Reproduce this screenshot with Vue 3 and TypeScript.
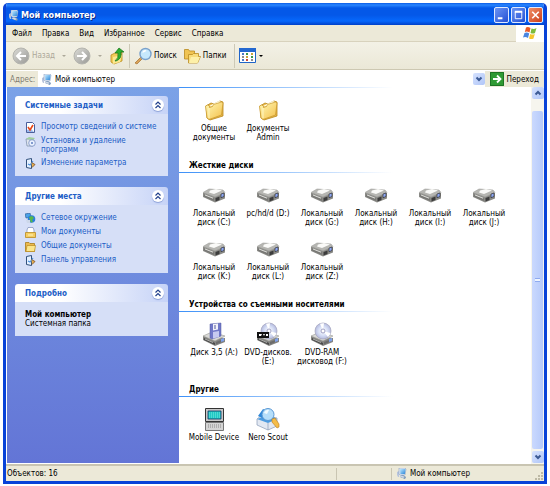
<script setup lang="ts">
interface Entry { icon: string; lines: string[] }
interface Group { title: string; entries: Entry[] }
interface Task { icon: string; label: string }
interface Panel { title: string; tasks: Task[] }

const menus: string[] = ['Файл', 'Правка', 'Вид', 'Избранное', 'Сервис', 'Справка']

const panels: Panel[] = [
  {
    title: 'Системные задачи',
    tasks: [
      { icon: 'check', label: 'Просмотр сведений о системе' },
      { icon: 'install', label: 'Установка и удаление программ' },
      { icon: 'panel', label: 'Изменение параметра' },
    ],
  },
  {
    title: 'Другие места',
    tasks: [
      { icon: 'network', label: 'Сетевое окружение' },
      { icon: 'docs', label: 'Мои документы' },
      { icon: 'shared', label: 'Общие документы' },
      { icon: 'panel', label: 'Панель управления' },
    ],
  },
]

const drive = (name: string, letter: string): Entry => ({ icon: 'drive', lines: [name, letter] })

const groups: Group[] = [
  {
    title: '',
    entries: [
      { icon: 'folder', lines: ['Общие', 'документы'] },
      { icon: 'folder', lines: ['Документы', 'Admin'] },
    ],
  },
  {
    title: 'Жесткие диски',
    entries: [
      drive('Локальный', 'диск (C:)'),
      { icon: 'drive', lines: ['pc/hd/d (D:)'] },
      drive('Локальный', 'диск (G:)'),
      drive('Локальный', 'диск (H:)'),
      drive('Локальный', 'диск (I:)'),
      drive('Локальный', 'диск (J:)'),
      drive('Локальный', 'диск (K:)'),
      drive('Локальный', 'диск (L:)'),
      drive('Локальный', 'диск (Z:)'),
    ],
  },
  {
    title: 'Устройства со съемными носителями',
    entries: [
      { icon: 'floppy', lines: ['Диск 3,5 (A:)'] },
      { icon: 'dvd', lines: ['DVD-дисков.', '(E:)'] },
      { icon: 'disc', lines: ['DVD-RAM', 'дисковод (F:)'] },
    ],
  },
  {
    title: 'Другие',
    entries: [
      { icon: 'mobile', lines: ['Mobile Device'] },
      { icon: 'nero', lines: ['Nero Scout'] },
    ],
  },
]
</script>

<template>
  <svg class="defs" aria-hidden="true">
    <defs>
      <linearGradient id="gFolder" x1="0" y1="0" x2="1" y2="1">
        <stop offset="0" stop-color="#fff9b8" /><stop offset="1" stop-color="#f4c04a" />
      </linearGradient>
      <linearGradient id="gScreen" x1="0" y1="0" x2="1" y2="1">
        <stop offset="0" stop-color="#bfe8ff" /><stop offset="1" stop-color="#2a86d8" />
      </linearGradient>
      <radialGradient id="gDisc">
        <stop offset="0" stop-color="#fff" /><stop offset=".6" stop-color="#d4dcf4" /><stop offset="1" stop-color="#b4bade" />
      </radialGradient>
      <linearGradient id="gGrey" x1="0" y1="0" x2="1" y2="1">
        <stop offset="0" stop-color="#dcdcd8" /><stop offset="1" stop-color="#989894" />
      </linearGradient>
      <symbol id="computer" viewBox="0 0 10 11">
        <path d="M0 7V4l2-1v6H1z" fill="#b8c4dc" />
        <path d="M2 0h6l1 1-1 6H3L2 6z" fill="#e2eaf6" stroke="#7790b8" stroke-width=".5" />
        <path d="M3 1h5.500l-.6 5H3.400z" fill="url(#gScreen)" />
        <path d="M4 7h2l3 2-1 2-5-2z" fill="#6f8fb4" /><path d="M2 8l3-.5 3 1.500-2 1z" fill="#cfd8e6" />
      </symbol>
      <symbol id="folder" viewBox="0 0 24 24">
        <path d="M4 8l5-3 3 1 6-3 3 1v14L8 22l-3-2z" fill="#e8b84c" stroke="#b98718" stroke-width=".8" />
        <path d="M5 9l12-6 2 1v3z" fill="#fffde0" />
        <path d="M3.500 8l2-1 2 1v1.500l3-1 1-2 8-2.500 1.500 1L19.500 17 7 21.500 5 20z" fill="url(#gFolder)" stroke="#c9962a" stroke-width=".7" />
        <path d="M7 10v10" stroke="#fffbd0" stroke-width=".8" />
      </symbol>
      <symbol id="driveBody" viewBox="0 0 24 24">
        <path d="M1 12v4l12 6 10-4v-4z" fill="#858582" />
        <path d="M1 12l9-4 13 4-10 5z" fill="#d9d9d6" stroke="#989894" stroke-width=".6" />
        <path d="M2 14l11 5v2L2 16z" fill="#4a4a4a" /><path d="M3 15l8 3.500" stroke="#c8c8c4" stroke-width=".8" />
        <path d="M14 18l8-3v2l-8 3.500z" fill="#6c6c6c" />
        <path d="M19 15l3-1v3l-3 1z" fill="#7ea2ee" />
      </symbol>
      <symbol id="drive" viewBox="0 0 24 24">
        <path d="M1 10v4l12 5.500 10-4V10z" fill="#8a8a86" />
        <path d="M1 9.500L7 6l14 1 2 2.500-10 4.500z" fill="#b6b6b2" stroke="#a0a09c" stroke-width=".6" />
        <path d="M8 7.500l6-1.500 6 1.500-8 3.500-5-1.500z" fill="#fafaf8" />
        <path d="M2 11.500l10 4v2.500l-10-4.500z" fill="#777774" /><path d="M3 12l8 3.200" stroke="#e0e0dc" stroke-width="1" />
        <path d="M13.500 15l4-1.500v3.500l-4 1.500z" fill="#3c3c3c" />
        <path d="M19 11l3-1v3.500l-3 1.200z" fill="#8fa8f4" stroke="#222" stroke-width=".6" />
      </symbol>
      <symbol id="floppy" viewBox="0 0 24 24">
        <use href="#driveBody" y="2" />
        <path d="M8 2l11-1v13l-9 3-2-1z" fill="#7078c8" stroke="#5058a0" stroke-width=".5" />
        <path d="M11 2l5-.5v6l-5 1z" fill="#f2f2fa" /><path d="M11 10l6-1v6l-6 1.500z" fill="#c6caf0" />
        <path d="M13 3v4" stroke="#505898" stroke-width="1" />
      </symbol>
      <symbol id="disc" viewBox="0 0 24 24">
        <use href="#driveBody" y="2" />
        <circle cx="13" cy="9" r="8" fill="url(#gDisc)" stroke="#a4a4bc" stroke-width=".7" />
        <path d="M13 9l-3-7.200a8 8 0 0 1 4-.6zM13 9l5 6a8 8 0 0 0 2.500-4z" fill="#fff" />
        <circle cx="13" cy="9" r="2" fill="#fff" stroke="#8c8cb4" stroke-width=".8" />
      </symbol>
      <symbol id="dvd" viewBox="0 0 24 24">
        <use href="#disc" />
        <path d="M1 10h12v6H1z" fill="#111" /><path d="M3 12h3l-1 2H3zM7 12l1 2 1-2M10 12h2v2h-2z" fill="#fff" />
      </symbol>
      <symbol id="mobile" viewBox="0 0 24 24">
        <path d="M3.500 1.500h18v13h-18z" fill="#c8c8c8" stroke="#333" />
        <path d="M6 4h13v8H6z" fill="#1fc8c4" stroke="#136" stroke-width=".8" />
        <path d="M7 6h11M7 8h11M7 10h11" stroke="#8ff4ee" stroke-width=".8" stroke-dasharray="1 1" />
        <path d="M3.500 15.500h18v8h-18z" fill="#d4d4d4" stroke="#777" />
        <path d="M6 18h13M6 20h13" stroke="#888" stroke-dasharray="1 1" />
      </symbol>
      <symbol id="nero" viewBox="0 0 24 24">
        <path d="M1 12l5-4 15 3v8l-9 4-11-5z" fill="#e2e8f2" stroke="#8899b4" stroke-width=".7" />
        <path d="M1 12l11 4 9-4-8-4z" fill="#4c9ce0" /><path d="M12 16v7" stroke="#8899b4" stroke-width=".7" />
        <path d="M2 9l5-7 6 3-3 8z" fill="#2f88d8" />
        <circle cx="12" cy="7.500" r="6" fill="#b5defa" stroke="#5a98d4" stroke-width="1" />
        <path d="M8 6a4 4 0 0 1 5-3l-2 4z" fill="#f2fbff" />
        <path d="M16 12l3-1 4 6v3l-2 1-5-6z" fill="#f4bc48" stroke="#b87c20" stroke-width=".6" />
      </symbol>
      <symbol id="check" viewBox="0 0 11 11">
        <path d="M1.500.5h6l2 2v8h-8z" fill="#fff" stroke="#4a5f9c" />
        <path d="M2 8l4-1 3 3H2z" fill="#9dbbee" />
        <path d="M3 5l2 3 3-5" fill="none" stroke="#e84818" stroke-width="1.600" />
      </symbol>
      <symbol id="install" viewBox="0 0 11 11">
        <path d="M1 3h7v7H2z" fill="#dfe5ee" stroke="#8494b0" stroke-width=".8" />
        <path d="M1 3l3-2 6 1-2 2z" fill="#9fd09c" /><circle cx="7" cy="7" r="3.300" fill="#e8f0ff" stroke="#7a8fc0" stroke-width=".8" />
        <circle cx="7" cy="7" r="1" fill="#6080c0" />
      </symbol>
      <symbol id="panel" viewBox="0 0 11 11">
        <path d="M1.500 1.500l5-1v10l-5-1z" fill="#e4f0ff" stroke="#31507c" />
        <path d="M3 6l2 1 3-4" fill="none" stroke="#4a90e0" stroke-width="1.200" />
        <path d="M6.500 4.500L10 6.500l-3 3" fill="#e8b050" stroke="#7a4a1a" stroke-width=".8" />
      </symbol>
      <symbol id="network" viewBox="0 0 11 11">
        <path d="M0 1l5-1 1 4-5 1z" fill="#4aa4e8" stroke="#31609c" stroke-width=".7" />
        <circle cx="6.500" cy="6" r="3.800" fill="#2b7edc" /><path d="M4 4l3-1 2 2-2 2 1 2-2 .5L5 7z" fill="#58b848" />
        <path d="M1 7h4v3H2z" fill="#cdd8ea" />
      </symbol>
      <symbol id="docs" viewBox="0 0 11 11">
        <path d="M2 3l1-2.500h5L9 3v4H2z" fill="#fff" stroke="#7a8cb8" stroke-width=".7" />
        <path d="M.5 5.500h10v5h-10z" fill="#f5cd62" stroke="#b98a20" stroke-width=".8" /><path d="M3 8h5" stroke="#fff5bd" />
      </symbol>
      <symbol id="shared" viewBox="0 0 11 11">
        <path d="M.5 1.500h3.500l1 1h4.500v8h-9z" fill="#ecb94e" stroke="#a87c1a" stroke-width=".8" />
        <path d="M2 4.500h8.500l-1 6H1z" fill="#fbe58c" stroke="#b98a20" stroke-width=".7" />
      </symbol>
    </defs>
  </svg>

  <main class="window">
    <header class="title">
      <svg class="pc"><use href="#computer" /></svg>
      <h1>Мой компьютер</h1>
      <button class="cap" aria-label="Свернуть"><svg viewBox="0 0 14 15"><path d="M3 10h5v2H3z" fill="#fff" /></svg></button>
      <button class="cap" aria-label="Развернуть"><svg viewBox="0 0 14 15"><path d="M3.500 4h7v7.500h-7z" fill="none" stroke="#fff" /><path d="M3 4h8" stroke="#fff" stroke-width="2" /></svg></button>
      <button class="cap close" aria-label="Закрыть"><svg viewBox="0 0 14 15"><path d="M3.500 4l7 7m0-7l-7 7" stroke="#fff" stroke-width="1.800" /></svg></button>
    </header>

    <nav class="menu">
      <button v-for="m in menus" :key="m">{{ m }}</button>
      <span class="flag">
        <svg viewBox="0 0 16 14">
          <path d="M4 1.500Q6 .5 8.500 2L7.500 6.500Q5 5 2.800 6z" fill="#ea5a28" />
          <path d="M9.500 2.500Q12 3.500 14.500 2L13 7Q11 8 8.500 7z" fill="#7dbb3c" />
          <path d="M2.500 7Q5 6 7.200 7.500L6 12Q3.500 10.500 1 11.500z" fill="#4a86e0" />
          <path d="M8.200 8Q10.500 9 12.800 8L11.500 12.500Q9.500 13.500 7 12.500z" fill="#f6c62c" />
        </svg>
      </span>
    </nav>

    <div class="tools">
      <button class="off back">
        <svg class="round" viewBox="0 0 18 18"><circle cx="9" cy="9" r="8" fill="url(#gGrey)" stroke="#b4b4ae" /><path d="M14 9H5m4-4L5 9l4 4" fill="none" stroke="#fff" stroke-width="2" /></svg>
        <span>Назад</span>
      </button>
      <button class="off drop" aria-label="История назад"><i class="caret"></i></button>
      <button class="off" aria-label="Вперед">
        <svg class="round" viewBox="0 0 18 18"><circle cx="9" cy="9" r="8" fill="url(#gGrey)" stroke="#b4b4ae" /><path d="M4 9h9M9 5l4 4-4 4" fill="none" stroke="#fff" stroke-width="2" /></svg>
      </button>
      <button class="off drop" aria-label="История вперед"><i class="caret"></i></button>
      <button class="up" aria-label="Вверх">
        <svg class="ic" viewBox="0 0 18 18"><path d="M2 8l4-2 7-1v9l-8 3-3-2z" fill="#f2cc58" stroke="#b98a20" stroke-width=".8" /><path d="M4 10l9-2-2 7-7 2z" fill="#fbe88e" /><path d="M6 14q4-3 3-8H6l4-5 5 4h-3q1 7-5 9z" fill="#2fae2c" stroke="#14701a" stroke-width=".7" /></svg>
      </button>
      <i class="sep"></i>
      <button class="find">
        <svg class="ic" viewBox="0 0 18 18"><path d="M1 16l6-6 2 1-6 6z" fill="#d9a25a" stroke="#9a6420" stroke-width=".6" /><circle cx="11.500" cy="7" r="5.500" fill="#c6e8fc" stroke="#7aa2cc" stroke-width="1.400" /><path d="M8.500 6a3 3 0 0 1 3-3l1 1z" fill="#fff" /></svg>
        <span>Поиск</span>
      </button>
      <button class="folders">
        <svg class="ic" viewBox="0 0 18 18"><path d="M1.500 2.500h4l1 1.500h5v8h-10z" fill="#f0c452" stroke="#b98a20" stroke-width=".8" /><path d="M5.500 7.500h4l1-1h5v3h2l-3 6.500h-9z" fill="#f8dc7a" stroke="#b98a20" stroke-width=".8" /><path d="M8 10h9l-2.500 6H6z" fill="#fdf0a8" /></svg>
        <span>Папки</span>
      </button>
      <i class="sep"></i>
      <button class="views" aria-label="Вид">
        <svg viewBox="0 0 17 15"><path d="M.5.500h16v14H.5z" fill="#fff" stroke="#1f64c8" /><path d="M0 0h17v4H0z" fill="#2468d0" /><g stroke-width="2"><path d="M3 6h2M3 12h2" stroke="#4a78c8" /><path d="M7 6h2M12 9h2" stroke="#38964a" /><path d="M3 9h2M12 12h2" stroke="#8c8c8c" /><path d="M7 9h2M12 6h2" stroke="#caa43c" /><path d="M7 12h2" stroke="#c84a38" /></g></svg>
        <i class="caret"></i>
      </button>
    </div>

    <form class="address" @submit.prevent>
      <label for="addr">Адрес:</label>
      <div class="field">
        <svg class="pc"><use href="#computer" /></svg>
        <input id="addr" type="text" value="Мой компьютер" />
        <button type="button" class="sb" aria-label="Список адресов"><svg viewBox="0 0 12 12"><path d="M3.500 4.500L6 7l2.500-2.500" fill="none" stroke="#3c5a94" stroke-width="2" /></svg></button>
      </div>
      <button class="go">
        <svg viewBox="0 0 14 14"><path d="M0 0h14v14H0z" fill="#2f9a34" /><path d="M.5.500h13v13H.5z" fill="none" stroke="#1d7424" /><path d="M3 7h7M7 3.500L10.500 7 7 10.500" fill="none" stroke="#fff" stroke-width="1.800" /></svg>
        <span>Переход</span>
      </button>
    </form>

    <div class="content">
      <aside>
        <section v-for="p in panels" :key="p.title" class="panel">
          <header><h2>{{ p.title }}</h2>
            <button :aria-label="'Свернуть: ' + p.title"><svg viewBox="0 0 12 12"><path d="M3.500 5.500L6 3l2.500 2.500M3.500 9L6 6.500 8.500 9" fill="none" stroke="#23418c" stroke-width="1.200" /></svg></button>
          </header>
          <ul>
            <li v-for="t in p.tasks" :key="t.label">
              <a href="#"><svg><use :href="'#' + t.icon" /></svg><span>{{ t.label }}</span></a>
            </li>
          </ul>
        </section>
        <section class="panel">
          <header><h2>Подробно</h2>
            <button aria-label="Свернуть: Подробно"><svg viewBox="0 0 12 12"><path d="M3.500 5.500L6 3l2.500 2.500M3.500 9L6 6.500 8.500 9" fill="none" stroke="#23418c" stroke-width="1.200" /></svg></button>
          </header>
          <p><b>Мой компьютер</b><br />Системная папка</p>
        </section>
      </aside>

      <div class="view">
        <section v-for="g in groups" :key="g.title" class="group">
          <h2 v-if="g.title">{{ g.title }}</h2>
          <div class="rule"></div>
          <div class="grid">
            <button v-for="(e, i) in g.entries" :key="i" class="entry">
              <svg><use :href="'#' + e.icon" /></svg>
              <span v-for="l in e.lines" :key="l">{{ l }}</span>
            </button>
          </div>
        </section>
      </div>

      <div class="scroll">
        <button class="sb" aria-label="Прокрутить вверх"><svg viewBox="0 0 12 12"><path d="M3.500 7.500L6 5l2.500 2.500" fill="none" stroke="#3c5a94" stroke-width="2" /></svg></button>
        <div class="thumb"><i></i></div>
        <button class="sb" aria-label="Прокрутить вниз"><svg viewBox="0 0 12 12"><path d="M3.500 4.500L6 7l2.500-2.500" fill="none" stroke="#3c5a94" stroke-width="2" /></svg></button>
      </div>
    </div>

    <footer class="status">
      <span class="count">Объектов: 16</span>
      <span class="blank"></span>
      <span class="where"><svg class="pc"><use href="#computer" /></svg>Мой компьютер</span>
      <svg class="grip" viewBox="0 0 10 10"><path d="M7 1h2v2H7zM4 4h2v2H4zM7 4h2v2H7zM1 7h2v2H1zM4 7h2v2H4zM7 7h2v2H7z" fill="#bdb9a5" /></svg>
    </footer>
  </main>
</template>

<style>
body { background: #fff; }
#app { padding: 3px 3px 2px 3px; }
</style>

<style scoped>
* { box-sizing: border-box; }
.defs { position: absolute; width: 0; height: 0; }
button { font: inherit; color: inherit; background: none; border: 0; padding: 0; display: flex; align-items: center; }
svg { display: block; flex: none; }
h1, h2, p, ul { margin: 0; padding: 0; list-style: none; }
.window {
  display: flex; flex-direction: column; min-height: calc(100vh - 5px);
  border: 3px solid #0842d8; border-top: 0; border-radius: 5px 5px 0 0; overflow: hidden;
  background: #ece9d8; color: #000;
  font: 8px/9px "DejaVu Sans Condensed", "Liberation Sans", sans-serif;
}
.pc { width: 10px; height: 11px; }
.title {
  display: flex; align-items: center; gap: 2px; height: 22px; padding: 2px 1px 0 3px;
  background: linear-gradient(#0a5be6 0, #2a86ff 2px, #0458e8 5px, #0458e8 12px, #0668fc 18px, #0040c8 22px);
}
.title h1 { flex: 1; font-size: 9px; line-height: 12px; font-weight: bold; color: #fff; text-shadow: 1px 1px 0 #0a2c88; }
.cap { width: 15px; height: 16px; border: 1px solid #dfe9ff; border-radius: 2px; background: linear-gradient(135deg, #6a94f4, #2450d4); }
.cap svg { width: 100%; height: 100%; }
.close { background: linear-gradient(135deg, #f09068, #cc3c18); }
.menu { display: flex; align-items: center; gap: 10px; height: 17px; padding-left: 6px; border-bottom: 1px solid #d8d2bd; }
.flag { display: flex; justify-content: center; align-items: center; margin-left: auto; width: 28px; height: 17px; background: #fff; }
.flag svg { width: 16px; height: 14px; }
.tools {
  display: flex; align-items: center; height: 28px; padding-left: 6px;
  background: linear-gradient(#f3f1e6, #ebe8d7); border-bottom: 1px solid #cdc8b2;
}
.off { color: #aca899; }
.round, .ic { width: 18px; height: 18px; }
.back, .find, .folders { gap: 2px; }
.drop { width: 18px; justify-content: center; }
.caret { width: 0; height: 0; border: 2px solid transparent; border-top-color: currentColor; border-bottom: 0; }
.sep { width: 1px; height: 24px; background: #cdc9b6; margin: 0 4px 0 2px; }
.folders { margin-left: 6px; }
.folders + .sep { margin-left: 8px; }
.views { gap: 3px; }
.views svg { width: 17px; height: 15px; }
.address { display: flex; align-items: center; height: 17px; padding: 0 5px 0 4px; border-top: 1px solid #fff; }
.address label { width: 28px; color: #7f7c70; }
.field { flex: 1; display: flex; align-items: center; gap: 3px; height: 100%; padding-left: 4px; background: #fff; }
.field input { flex: 1; min-width: 0; border: 0; padding: 0; outline: 0; background: none; font: inherit; color: inherit; }
.sb { width: 12px; height: 12px; border-radius: 2px; background: linear-gradient(135deg, #d6e2fe, #b0c6f8); }
.sb svg { width: 12px; height: 12px; }
.go { gap: 3px; margin-left: 5px; }
.go svg { width: 14px; height: 14px; }
.content { flex: 1; display: flex; background: #fff; padding-left: 1px; }
aside {
  display: flex; flex-direction: column; gap: 11px; width: 172px; flex: none;
  padding: 9px 11px 0 8px; background: linear-gradient(#7ba2e7, #6375d6);
  margin-bottom: 1px;
}
.panel header {
  display: flex; align-items: center; justify-content: space-between; height: 18px; padding: 0 4px 0 10px;
  border-radius: 3px 3px 0 0; background: linear-gradient(90deg, #fff 30%, #c6d3f7);
}
.panel h2 { font: inherit; font-weight: bold; color: #215dc6; }
.panel header button { width: 12px; height: 12px; border-radius: 50%; background: #fff; box-shadow: 0 1px 1px #8ea2d8; }
.panel header svg { width: 12px; height: 12px; }
.panel ul, .panel p { padding: 8px 10px; background: #d6dff7; }
.panel ul { display: flex; flex-direction: column; gap: 4px; padding-right: 4px; }
.panel a { display: flex; gap: 5px; min-height: 10px; color: #215dc6; text-decoration: none; }
.panel a svg { width: 11px; height: 11px; margin-bottom: -1px; }
.view { flex: 1; min-width: 0; }
.group h2 { padding-left: 10px; font: inherit; font-weight: bold; line-height: 12px; }
.rule { width: 214px; height: 1px; background: linear-gradient(90deg, #3c90f8, #fff); }
.grid { display: grid; grid-template-columns: repeat(auto-fill, 54px); grid-auto-rows: 44px; row-gap: 10px; padding: 10px 0 18px 8px; }
.group:last-child .grid { padding-bottom: 0; }
.entry { flex-direction: column; text-align: center; white-space: nowrap; }
.entry svg { width: 24px; height: 24px; margin-bottom: 2px; }
.scroll { display: flex; flex-direction: column; width: 13px; padding: 0 0 1px 1px; background: #f6f5ee; }
.thumb { flex: 1; display: flex; align-items: center; justify-content: center; margin: 12px 1px 2px 0; border-radius: 2px; background: linear-gradient(90deg, #cad9fe, #b6cafa); }
.thumb i { width: 5px; height: 4px; border: solid #8eaaf0; border-width: 1px 0; background: #eef4fe; }
.status { display: flex; align-items: center; height: 17px; border-top: 2px solid #c9c5b2; padding-left: 1px; }
.count { flex: 1; }
.blank { width: 56px; height: 12px; border: solid #c9c5b2; border-width: 0 1px; }
.where { display: flex; align-items: center; gap: 3px; width: 142px; padding-left: 5px; }
.grip { width: 10px; height: 10px; align-self: flex-end; }
</style>
